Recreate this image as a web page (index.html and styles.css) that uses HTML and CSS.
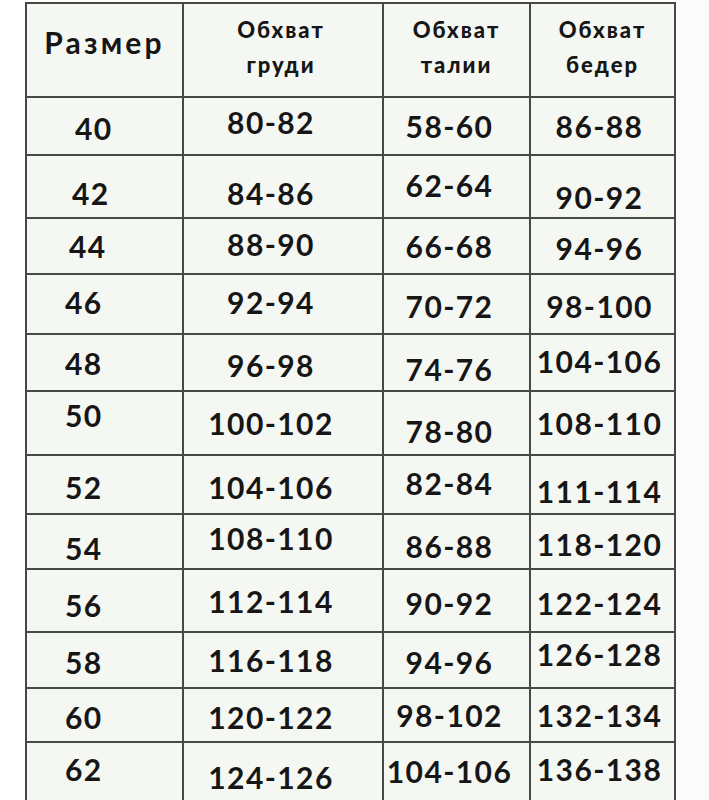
FILE: index.html
```html
<!DOCTYPE html>
<html lang="ru">
<head>
<meta charset="utf-8">
<title>Таблица размеров</title>
<link rel="stylesheet" href="styles.css">
</head>
<body>
<div class="page">
  <div class="chart">
    <div class="cell head c1 up8">Размер</div>
    <div class="cell head c2"><span class="two">Обхват<br>груди</span></div>
    <div class="cell head c3"><span class="two">Обхват<br>талии</span></div>
    <div class="cell head c4"><span class="two">Обхват<br>бедер</span></div>

    <div class="cell c1 in8 dn2">40</div>
    <div class="cell c2 up4">80-82</div>
    <div class="cell c3">58-60</div>
    <div class="cell c4">86-88</div>

    <div class="cell c1 in4 dn6">42</div>
    <div class="cell c2 dn6">84-86</div>
    <div class="cell c3 up2">62-64</div>
    <div class="cell c4 dn10">90-92</div>

    <div class="cell c1 in2">44</div>
    <div class="cell c2 up2">88-90</div>
    <div class="cell c3">66-68</div>
    <div class="cell c4 dn2">94-96</div>

    <div class="cell c1 up2">46</div>
    <div class="cell c2 up2">92-94</div>
    <div class="cell c3 dn2">70-72</div>
    <div class="cell c4 dn2">98-100</div>

    <div class="cell c1">48</div>
    <div class="cell c2 dn2">96-98</div>
    <div class="cell c3 dn6">74-76</div>
    <div class="cell c4 up2">104-106</div>

    <div class="cell c1 up8">50</div>
    <div class="cell c2">100-102</div>
    <div class="cell c3 dn8">78-80</div>
    <div class="cell c4">108-110</div>

    <div class="cell c1 dn2">52</div>
    <div class="cell c2 dn2">104-106</div>
    <div class="cell c3 up2">82-84</div>
    <div class="cell c4 dn6">111-114</div>

    <div class="cell c1 dn6">54</div>
    <div class="cell c2 up4">108-110</div>
    <div class="cell c3 dn4">86-88</div>
    <div class="cell c4 dn2">118-120</div>

    <div class="cell c1 dn4">56</div>
    <div class="cell c2">112-114</div>
    <div class="cell c3 dn2">90-92</div>
    <div class="cell c4 dn2">122-124</div>

    <div class="cell c1 dn2">58</div>
    <div class="cell c2">116-118</div>
    <div class="cell c3 dn2">94-96</div>
    <div class="cell c4 up6">126-128</div>

    <div class="cell c1 dn2">60</div>
    <div class="cell c2 dn2">120-122</div>
    <div class="cell c3">98-102</div>
    <div class="cell c4">132-134</div>

    <div class="cell c1 up8">62</div>
    <div class="cell c2">124-126</div>
    <div class="cell c3 up6">104-106</div>
    <div class="cell c4 up8">136-138</div>
  </div>
</div>
</body>
</html>
```

FILE: styles.css
```css
html, body {
  margin: 0;
  padding: 0;
  background: #ffffff;
}

.page {
  width: 709px;
  height: 800px;
  overflow: hidden;
  padding: 2px 0 0 25px;
  box-sizing: border-box;
  background: linear-gradient(to right, #ffffff 0, #ffffff 676px, #fafbfa 676px);
}

.chart {
  display: grid;
  grid-template-columns: 157px 200px 147px 145px;
  grid-template-rows: 94px 58px 63px 56px 60px 57px 64px 59px 55px 63px 56px 54px 70px;
  width: max-content;
  border-top: 2px solid #474947;
  border-left: 2px solid #474947;
  background: #f5f7f3;
  font-family: Lato, "Open Sans", "DejaVu Sans", sans-serif;
  font-weight: 700;
  color: #161616;
}

.cell {
  display: flex;
  align-items: center;
  box-sizing: border-box;
  border-right: 2px solid #474947;
  border-bottom: 2px solid #474947;
  font-size: 30px;
  line-height: 1;
  letter-spacing: 1.4px;
  white-space: nowrap;
}

.c1 {
  justify-content: flex-start;
  padding-left: 38px;
}

.c2 {
  justify-content: center;
  padding-right: 24px;
}

.c3 {
  justify-content: center;
  padding-right: 14px;
}

.c4 {
  justify-content: center;
  padding-right: 6px;
}

.head.c1 {
  justify-content: center;
  padding-left: 0;
  font-size: 30px;
  letter-spacing: 3.2px;
}

.head.c2,
.head.c3,
.head.c4 {
  padding-right: 0;
  padding-bottom: 7px;
}

.head.c2 .two { margin-right: 4px; }

.two {
  font-size: 22px;
  font-weight: 900;
  line-height: 35px;
  letter-spacing: 2px;
  text-align: center;
}

.in2 { padding-left: 42px; }
.in4 { padding-left: 45px; }
.in8 { padding-left: 48px; }

.dn2 { padding-top: 4px; }
.dn4 { padding-top: 8px; }
.dn6 { padding-top: 12px; }
.dn8 { padding-top: 16px; }
.dn10 { padding-top: 20px; }

.up2 { padding-bottom: 4px; }
.up4 { padding-bottom: 8px; }
.up6 { padding-bottom: 12px; }
.up8 { padding-bottom: 16px; }
```
